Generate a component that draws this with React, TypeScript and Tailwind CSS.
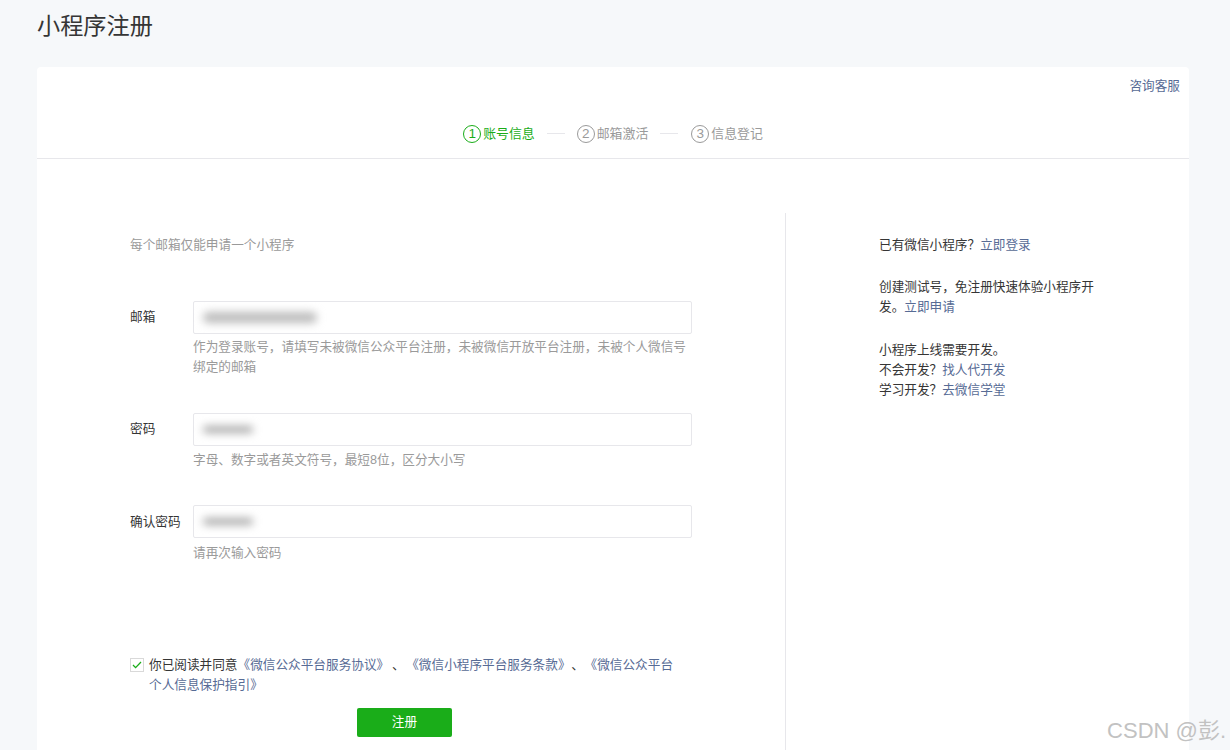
function Field({ label, help, valueW, labelPt, helpMt, barClass }: { label: string; help: React.ReactNode; valueW: string; labelPt: string; helpMt: string; barClass: string }) {
  return (
    <div className="flex">
      <div className={`w-[63px] ${labelPt} text-[#353535] leading-[20px]`}>{label}</div>
      <div className="w-[499px]">
        <div className="h-[33px] border border-[#e7e7eb] rounded-[2px] bg-white flex items-center pl-[9px]">
          <div className={`${barClass} ${valueW} rounded-full blur-[4px]`} />
        </div>
        <div className={`${helpMt} text-[#9a9a9a] leading-[20px]`}>{help}</div>
      </div>
    </div>
  );
}

function Step({ n, text, active }: { n: number; text: string; active?: boolean }) {
  return (
    <div className={`flex items-center gap-[2px] ${active ? "text-[#1aad19]" : "text-[#9a9a9a]"}`}>
      <span className={`w-[18px] h-[18px] rounded-full border flex items-center justify-center text-[13.5px] leading-none ${active ? "border-[#1aad19]" : "border-[#9a9a9a]"}`}>{n}</span>
      <span className="text-[12.9px]">{text}</span>
    </div>
  );
}

const Link = ({ children }: { children: React.ReactNode }) => <a className="text-[#576b95]">{children}</a>;

export default function App() {
  return (
    <div className="h-[750px] overflow-hidden bg-[#f6f8fa] relative text-[12.65px] font-['Liberation_Sans','Noto_Sans_CJK_SC',sans-serif]">
      <div className="px-[37px]">
        <h1 className="h-[67px] pt-[10px] text-[23.2px] leading-[32px] text-[#353535]">小程序注册</h1>
        <div className="w-[1152px] h-[700px] bg-white rounded-t-[4px]">
          <div className="h-[92px] border-b border-[#e7e7eb] flex flex-col">
            <div className="h-[57px] pt-[9px] pr-[9px] text-right leading-[20px]"><Link>咨询客服</Link></div>
            <div className="flex items-center justify-center">
              <Step n={1} text="账号信息" active />
              <span className="w-[18px] h-px bg-[#e7e7eb] ml-[12px] mr-[12px]" />
              <Step n={2} text="邮箱激活" />
              <span className="w-[18px] h-px bg-[#e7e7eb] ml-[12px] mr-[13px]" />
              <Step n={3} text="信息登记" />
            </div>
          </div>
          <div className="flex pt-[54px]">
            <div className="w-[749px] h-[600px] border-r border-[#e7e7eb] pl-[93px]">
              <p className="text-[#9a9a9a] leading-[20px] pt-[22px]">每个邮箱仅能申请一个小程序</p>
              <div className="mt-[46px] flex flex-col">
                <div className="h-[112px]">
                  <Field label="邮箱" labelPt="pt-[6px]" helpMt="mt-[3px]" barClass="h-[11px] bg-[#bcbcbc]" valueW="w-[114px]" help={<>作为登录账号，请填写未被微信公众平台注册，未被微信开放平台注册，未被个人微信号<br />绑定的邮箱</>} />
                </div>
                <div className="h-[92px]">
                  <Field label="密码" labelPt="pt-[6px]" helpMt="mt-[4px]" barClass="h-[7px] bg-[#a8a8a8]" valueW="w-[50px]" help="字母、数字或者英文符号，最短8位，区分大小写" />
                </div>
                <Field label="确认密码" labelPt="pt-[7px]" helpMt="mt-[5px]" barClass="h-[7px] bg-[#a8a8a8]" valueW="w-[50px]" help="请再次输入密码" />
              </div>
              <div className="mt-[92px] flex w-[560px]">
                <span className="w-[14px] h-[14px] mt-[3px] border border-[#d9d9d9] flex items-center justify-center shrink-0">
                  <svg width="10" height="8" viewBox="0 0 10 8" fill="none"><path d="M1 4l2.6 2.6L9 1" stroke="#1aad19" strokeWidth="1.3" /></svg>
                </span>
                <p className="ml-[5px] w-[540px] leading-[20px] text-[#353535]">
                  你已阅读并同意<Link>《微信公众平台服务协议》</Link><span className="ml-[9px] mr-[8px]">、</span><Link>《微信小程序平台服务条款》</Link><span className="mx-[7px]">、</span><Link>《微信公众平台<br />个人信息保护指引》</Link>
                </p>
              </div>
              <div className="w-[549px] mt-[13px] flex justify-center">
                <button className="w-[95px] h-[29px] rounded-[2px] bg-[#1aad19] text-white">注册</button>
              </div>
            </div>
            <div className="pl-[93px] w-[320px] pt-[22px] leading-[20px] text-[#353535]">
              <p>已有微信小程序？<Link>立即登录</Link></p>
              <p className="mt-[22px]">创建测试号，免注册快速体验小程序开<br />发。<Link>立即申请</Link></p>
              <p className="mt-[23px]">小程序上线需要开发。</p>
              <p>不会开发？<Link>找人代开发</Link></p>
              <p>学习开发？<Link>去微信学堂</Link></p>
            </div>
          </div>
        </div>
      </div>
      <div className="absolute right-[4px] bottom-[4px] text-[22px] leading-[30px] text-[#c2c2c2]">CSDN @彭.</div>
    </div>
  );
}
